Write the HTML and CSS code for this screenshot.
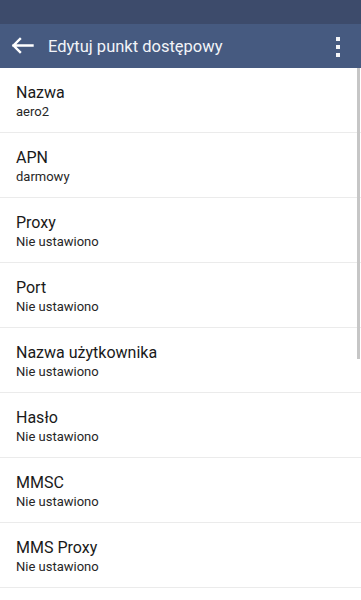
FILE: index.html
```html
<!DOCTYPE html>
<html lang="pl">
<head>
<meta charset="utf-8">
<link rel="stylesheet" href="styles.css">
</head>
<body>
<div class="statusbar"></div>
<header class="toolbar">
  <svg class="back" width="24" height="24" viewBox="0 0 24 24" aria-hidden="true">
    <path d="M3.5 11.5H22.5M10 5L3.5 11.5L10 18" fill="none" stroke="#ffffff" stroke-width="2.4" stroke-linecap="square" stroke-linejoin="miter"/>
  </svg>
  <h1 class="title">Edytuj punkt dostępowy</h1>
  <div class="kebab"><span></span><span></span><span></span></div>
</header>
<main class="list">
  <div class="item"><div class="label">Nazwa</div><div class="value">aero2</div></div>
  <div class="item"><div class="label">APN</div><div class="value">darmowy</div></div>
  <div class="item"><div class="label">Proxy</div><div class="value">Nie ustawiono</div></div>
  <div class="item"><div class="label">Port</div><div class="value">Nie ustawiono</div></div>
  <div class="item"><div class="label">Nazwa użytkownika</div><div class="value">Nie ustawiono</div></div>
  <div class="item"><div class="label">Hasło</div><div class="value">Nie ustawiono</div></div>
  <div class="item"><div class="label">MMSC</div><div class="value">Nie ustawiono</div></div>
  <div class="item"><div class="label">MMS Proxy</div><div class="value">Nie ustawiono</div></div>
  <div class="scrollbar"></div>
</main>
</body>
</html>
```
FILE: styles.css
```css
html, body {
  margin: 0;
  padding: 0;
  background: #ffffff;
  font-family: Roboto, "Noto Sans", "Liberation Sans", sans-serif;
  width: 361px;
  height: 600px;
  overflow: hidden;
}
.statusbar {
  height: 24px;
  background: #3d4b6b;
}
.toolbar {
  height: 44px;
  background: #465a80;
  display: flex;
  align-items: center;
  position: relative;
}
.back {
  margin-left: 10px;
  flex: none;
}
.title {
  margin: 0 0 0 14px;
  font-size: 16.5px;
  font-weight: 400;
  color: #f2f4f8;
  line-height: 20px;
  padding-top: 1px;
  flex: 1;
}
.kebab {
  width: 4px;
  margin-right: 21px;
  display: flex;
  flex-direction: column;
  gap: 4px;
  padding-top: 1px;
}
.kebab span {
  width: 4px;
  height: 4px;
  background: #f4f5f8;
}
.list {
  position: relative;
}
.item {
  height: 49px;
  border-bottom: 1px solid #ebebeb;
  padding: 15px 16px 0;
}
.label {
  font-size: 16px;
  line-height: 20px;
  color: #1a1a1a;
}
.value {
  font-size: 13px;
  line-height: 18px;
  color: #262626;
}
.scrollbar {
  position: absolute;
  top: 0;
  right: 1px;
  width: 3px;
  height: 291px;
  background: #c6c6c6;
}
```
